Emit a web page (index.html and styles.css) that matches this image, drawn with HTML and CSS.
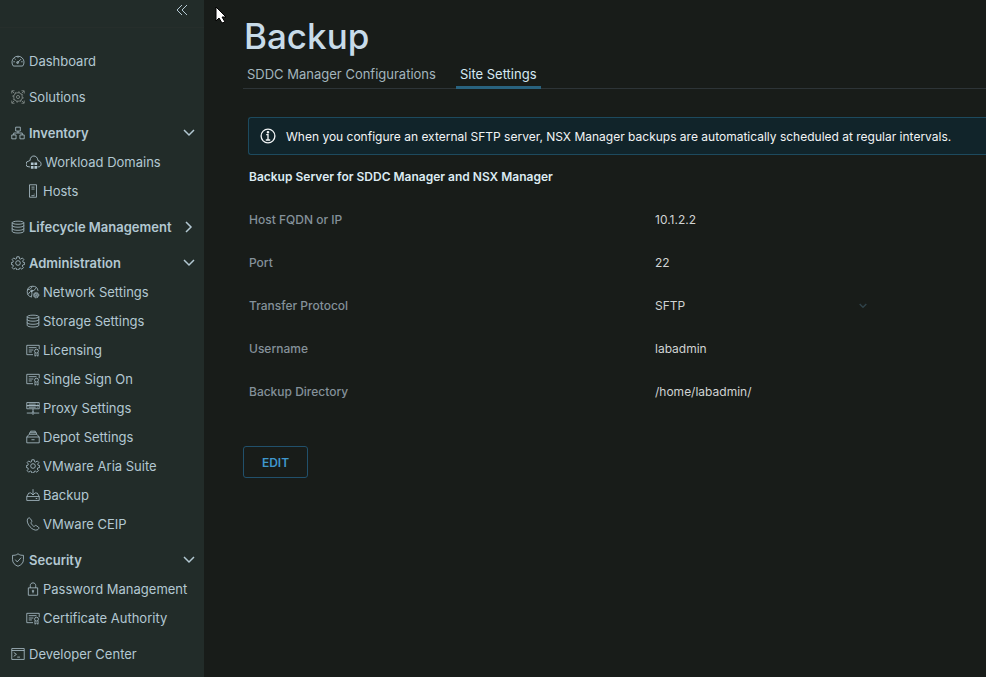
FILE: index.html
```html
<!DOCTYPE html>
<html lang="en">
<head>
  <meta charset="utf-8">
  <title>Backup - SDDC Manager</title>
  <link rel="stylesheet" href="styles.css">
</head>
<body>

<!-- Shared icons -->
<svg class="sprite" aria-hidden="true">
  <symbol id="dashboard" viewBox="0 0 36 36"><path d="M6 31a15.500 15.500 0 1 1 24 0Z"/><path d="M16 23 26 13M18 6v4M6 20h4M26 20h4M9 12l3 2"/><circle cx="17" cy="22" r="2.500"/></symbol>
  <symbol id="solutions" viewBox="0 0 36 36"><path d="M2 9V2h7M27 2h7v7M34 27v7h-7M9 34H2v-7M3 3l5 5M33 3l-5 5M33 33l-5-5M3 33l5-5"/><circle cx="18" cy="18" r="11"/><circle cx="18" cy="18" r="13" stroke-dasharray="5 5"/><circle cx="18" cy="18" r="4"/></symbol>
  <symbol id="inventory" viewBox="0 0 36 36"><path d="M12 3h12v10H12ZM2 23h11v10H2ZM23 23h11v10H23ZM18 13v5M7 23v-5h22v5"/></symbol>
  <symbol id="cloud" viewBox="0 0 36 36"><path d="M9 29H7a6 6 0 0 1-1-13c1-1 2-1 3-1 0-14 17-14 18 0 9 1 9 14 1 14h-2"/><path d="M11 19h6v6h-6ZM19 19h6v6h-6ZM11 27h6v6h-6ZM19 27h6v6h-6Z" class="solid"/></symbol>
  <symbol id="host" viewBox="0 0 36 36"><path d="M9 2h18v32H9ZM14 8h8M14 13h8M20 26h2M14 30h8"/></symbol>
  <symbol id="storage" viewBox="0 0 36 36"><ellipse cx="18" cy="7" rx="15" ry="4"/><path d="M3 7v22c0 6 30 6 30 0V7M3 14c0 6 30 6 30 0M3 22c0 6 30 6 30 0"/></symbol>
  <symbol id="cog" viewBox="0 0 36 36"><path d="m15 2h6l1 5 3 1 4-3 4 4-3 4 1 3 4 1v5l-5 1-1 3 3 4-4 4-4-3-3 1-1 4h-5l-1-4-3-1-4 3-4-4 3-4-1-3-4-1v-5l4-1 1-3-3-4 4-4 4 3 3-1Z"/><circle cx="18" cy="18" r="6"/></symbol>
  <symbol id="network" viewBox="0 0 36 36"><path d="M15 31A14 14 0 1 1 31 15M4 12c7 0 9-3 12-8M5 24c5-4 4-9 11-9s8-6 10-8M12 15c5 3 3 8 2 15"/><circle cx="15" cy="15" r="2"/><circle cx="26" cy="26" r="7" stroke-dasharray="3.500 1.500"/><circle cx="26" cy="26" r="5"/><circle cx="26" cy="26" r="1.500"/></symbol>
  <symbol id="certificate" viewBox="0 0 36 36"><path d="M18 30H2V6h32v10M7 12h20M7 18h12M7 23h8"/><circle cx="27" cy="21" r="5"/><path d="M23 25v9l4-3 4 3v-9"/></symbol>
  <symbol id="proxy" viewBox="0 0 36 36"><path d="M2 4h32v8H2ZM2 12h32v8H2ZM7 8h18M7 16h18M28 8h2M28 16h2M18 20v9M2 31h12M22 31h12"/><circle cx="18" cy="31" r="3"/></symbol>
  <symbol id="depot" viewBox="0 0 36 36"><path d="M2 18h32v15H2ZM2 18l6-7h20l6 7M9 10V7h18v3M12 6V3h12v3M14 25h8"/></symbol>
  <symbol id="backup" viewBox="0 0 36 36"><path d="M2 22h32v10H2ZM2 22l5-9h5M24 13h5l5 9M18 3v14M12 12l6 6 6-6M25 27h4"/></symbol>
  <symbol id="phone" viewBox="0 0 36 36"><path d="M4 5c2-3 5-4 7-1l4 6c1 2-3 4-2 6 2 4 4 6 7 8 2 1 4-4 6-2l6 4c3 2 0 6-3 7C18 38-1 17 4 5Z"/></symbol>
  <symbol id="shield" viewBox="0 0 36 36"><path d="M18 2c5 4 9 4 14 4v11c0 9-6 14-14 17C10 31 4 26 4 17V6c5 0 9 0 14-4ZM11 17l5 6 10-11"/></symbol>
  <symbol id="lock" viewBox="0 0 36 36"><path d="M6 15h24v19H6ZM11 15V9c0-9 14-9 14 0v6M18 24v5"/><circle cx="18" cy="23" r="2"/></symbol>
  <symbol id="terminal" viewBox="0 0 36 36"><path d="M2 4h32v28H2ZM2 9h32M7 14l7 5-7 5M16 26h7"/></symbol>
  <symbol id="chevron" viewBox="0 0 12 12"><path d="m1 3 5 5 5-5"/></symbol>
</svg>

<div class="app">
  <aside class="sidebar">
    <div class="sidebar-top">
      <button class="collapse" aria-label="Collapse menu">
        <svg viewBox="0 0 12 12"><path d="M6 1 1 6l5 5M11 1 6 6l5 5"/></svg>
      </button>
    </div>
    <nav class="nav">
      <a class="nav-item" href="#"><svg class="icon"><use href="#dashboard"/></svg>Dashboard</a>
      <a class="nav-item" href="#"><svg class="icon muted"><use href="#solutions"/></svg>Solutions</a>

      <div class="nav-group">
        <button class="nav-item nav-header"><svg class="icon"><use href="#inventory"/></svg>Inventory<svg class="caret"><use href="#chevron"/></svg></button>
        <a class="nav-item sub" href="#"><svg class="icon icon-lg"><use href="#cloud"/></svg>Workload Domains</a>
        <a class="nav-item sub" href="#"><svg class="icon"><use href="#host"/></svg>Hosts</a>
      </div>

      <button class="nav-item nav-header"><svg class="icon"><use href="#storage"/></svg>Lifecycle Management<svg class="caret closed"><use href="#chevron"/></svg></button>

      <div class="nav-group">
        <button class="nav-item nav-header"><svg class="icon"><use href="#cog"/></svg>Administration<svg class="caret"><use href="#chevron"/></svg></button>
        <a class="nav-item sub" href="#"><svg class="icon"><use href="#network"/></svg>Network Settings</a>
        <a class="nav-item sub" href="#"><svg class="icon"><use href="#storage"/></svg>Storage Settings</a>
        <a class="nav-item sub" href="#"><svg class="icon"><use href="#certificate"/></svg>Licensing</a>
        <a class="nav-item sub" href="#"><svg class="icon"><use href="#certificate"/></svg>Single Sign On</a>
        <a class="nav-item sub" href="#"><svg class="icon"><use href="#proxy"/></svg>Proxy Settings</a>
        <a class="nav-item sub" href="#"><svg class="icon"><use href="#depot"/></svg>Depot Settings</a>
        <a class="nav-item sub" href="#"><svg class="icon"><use href="#cog"/></svg>VMware Aria Suite</a>
        <a class="nav-item sub" href="#"><svg class="icon"><use href="#backup"/></svg>Backup</a>
        <a class="nav-item sub" href="#"><svg class="icon"><use href="#phone"/></svg>VMware CEIP</a>
      </div>

      <div class="nav-group">
        <button class="nav-item nav-header"><svg class="icon"><use href="#shield"/></svg>Security<svg class="caret"><use href="#chevron"/></svg></button>
        <a class="nav-item sub" href="#"><svg class="icon"><use href="#lock"/></svg>Password Management</a>
        <a class="nav-item sub" href="#"><svg class="icon"><use href="#certificate"/></svg>Certificate Authority</a>
      </div>

      <a class="nav-item" href="#"><svg class="icon"><use href="#terminal"/></svg>Developer Center</a>
    </nav>
  </aside>

  <main class="content">
    <h1>Backup</h1>

    <div class="tabs" role="tablist">
      <button class="tab" role="tab" aria-selected="false">SDDC Manager Configurations</button>
      <button class="tab active" role="tab" aria-selected="true">Site Settings</button>
    </div>

    <div class="alert">
      <svg class="alert-icon" viewBox="0 0 36 36"><circle cx="18" cy="18" r="15.500"/><path d="M14 15h4v12M13 27h10"/><circle cx="18" cy="9.500" r="1.500"/></svg>
      <span>When you configure an external SFTP server, NSX Manager backups are automatically scheduled at regular intervals.</span>
    </div>

    <form class="settings">
      <h2>Backup Server for SDDC Manager and NSX Manager</h2>
      <div class="row">
        <label for="host-name">Host FQDN or IP</label>
        <input type="text" id="host-name" value="10.1.2.2" readonly>
      </div>
      <div class="row">
        <label for="port">Port</label>
        <input type="text" id="port" value="22" readonly>
      </div>
      <div class="row">
        <label for="protocol">Transfer Protocol</label>
        <div class="select">
          <select id="protocol" disabled>
            <option>SFTP</option>
          </select>
          <svg class="select-caret"><use href="#chevron"/></svg>
        </div>
      </div>
      <div class="row">
        <label for="username">Username</label>
        <input type="text" id="username" value="labadmin" readonly>
      </div>
      <div class="row">
        <label for="directory">Backup Directory</label>
        <input type="text" id="directory" value="/home/labadmin/" readonly>
      </div>
    </form>

    <button class="btn">EDIT</button>
  </main>
</div>

<svg class="pointer" viewBox="0 0 12 18" aria-hidden="true"><path d="M1 1v14l3-3 3 5 3-1-3-5h4Z"/></svg>

</body>
</html>
```
FILE: styles.css
```css
* {
  box-sizing: border-box;
}

body {
  margin: 0;
  background-color: #181c19;
  color: #f1f4f5;
  font-family: Inter, "Open Sans", sans-serif;
  font-size: 12px;
  overflow: hidden;
}

button,
input,
select {
  font: inherit;
  color: inherit;
  background: none;
  border: none;
  margin: 0;
  padding: 0;
}

button {
  cursor: pointer;
}

svg {
  fill: none;
  stroke: currentColor;
}

.sprite {
  position: absolute;
  width: 0;
  height: 0;
}

.solid {
  fill: currentColor;
  stroke: none;
}

.app {
  display: flex;
  height: 100vh;
}

/* Sidebar */
.sidebar {
  flex: 0 0 204px;
  background-color: #222c29;
  color: #b3c8d2;
}

.sidebar-top {
  display: flex;
  justify-content: flex-end;
  height: 28px;
  padding: 4px 16px 0 0;
  border-bottom: 1px solid #262e2b;
}

.collapse {
  display: block;
  width: 12px;
  height: 12px;
}

.collapse svg {
  display: block;
}

.nav {
  display: flex;
  flex-direction: column;
  gap: 7px;
  padding-top: 18px;
}

.nav-group {
  display: flex;
  flex-direction: column;
}

.nav-item {
  display: flex;
  align-items: center;
  gap: 4px;
  height: 29px;
  padding: 0 9px 0 11px;
  color: inherit;
  font-size: 13px;
  text-align: left;
  text-decoration: none;
  white-space: nowrap;
}

.nav-header {
  font-weight: 600;
}

.sub {
  padding-left: 26px;
  gap: 3px;
}

.icon {
  flex: none;
  width: 14px;
  height: 14px;
  stroke-width: 2;
}

.icon-lg {
  width: 16px;
  height: 16px;
}

.muted {
  color: #8b9492;
}

.caret {
  width: 12px;
  height: 12px;
  margin-left: auto;
  stroke-width: 1.5;
}

.closed {
  transform: rotate(-90deg);
}

/* Content */
.content {
  flex: 1;
  min-width: 0;
  padding: 14px 0 0 39px;
}

h1 {
  margin: 0;
  padding-left: 1px;
  color: #c8dbe9;
  font-size: 35px;
  font-weight: 500;
  line-height: 44px;
}

.tabs {
  display: flex;
  gap: 16px;
  border-bottom: 1px solid #2d3437;
}

.tab {
  height: 31px;
  padding: 3px 4px 0;
  margin-bottom: -1px;
  border-bottom: 3px solid transparent;
  color: #a3b5bd;
  font-size: 13px;
}

.active {
  border-bottom-color: #29637f;
  color: #d5e9f3;
}

.alert {
  display: flex;
  align-items: center;
  gap: 10px;
  height: 38px;
  margin: 28px 0 0 5px;
  padding-left: 11px;
  border: 1px solid #1d4a5e;
  border-right: none;
  border-radius: 3px 0 0 3px;
  background-color: #11242a;
  white-space: nowrap;
}

.alert-icon {
  flex: none;
  width: 16px;
  height: 16px;
  stroke-width: 3;
}

.settings {
  padding: 12px 0 0 6px;
}

h2 {
  margin: 0 0 11px;
  color: #dcebf2;
  font-size: 12px;
  font-weight: 600;
  line-height: 20px;
}

.row {
  display: grid;
  grid-template-columns: 406px 216px;
  align-items: center;
  height: 43px;
}

.row label {
  color: #84919a;
  font-weight: 500;
}

.row input,
.row select {
  width: 100%;
  height: 24px;
  color: #d0d3d3;
  outline: none;
}

.select {
  display: grid;
  align-items: center;
}

.select > * {
  grid-area: 1 / 1;
}

.select select {
  appearance: none;
  opacity: 1;
}

.select-caret {
  justify-self: end;
  width: 8px;
  height: 8px;
  margin-right: 4px;
  color: #30434a;
  stroke-width: 2;
}

.btn {
  width: 65px;
  height: 32px;
  margin-top: 33px;
  border: 1px solid #21506b;
  border-radius: 3px;
  color: #3f97cd;
  font-weight: 600;
}

/* Mouse pointer over the page */
.pointer {
  position: absolute;
  left: 215px;
  top: 6px;
  width: 12px;
  height: 18px;
  fill: #fff;
  stroke: #000;
}
```
